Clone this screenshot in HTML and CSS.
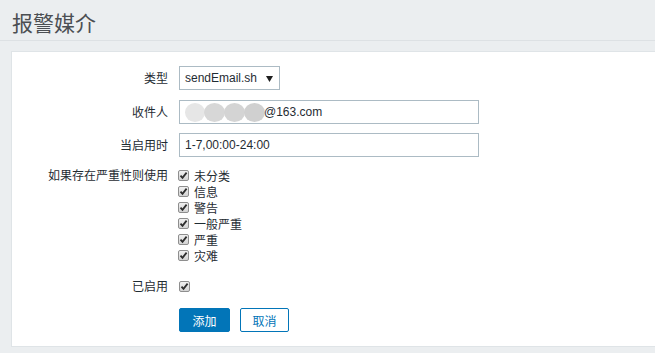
FILE: index.html
```html
<!DOCTYPE html>
<html lang="zh">
<head>
<meta charset="utf-8">
<title>报警媒介</title>
<link rel="stylesheet" href="styles.css">
</head>
<body>
<header class="page-header">
  <h1 class="page-title">报警媒介</h1>
</header>
<main class="panel">
  <form class="form">
    <div class="row row-type">
      <label class="label">类型</label>
      <div class="control">
        <div class="select">
          <span>sendEmail.sh</span>
          <svg class="arrow" width="7" height="6" viewBox="0 0 7 6"><path d="M0 0H7L3.5 6Z" fill="#1f1f1f"/></svg>
        </div>
      </div>
    </div>
    <div class="row row-to">
      <label class="label">收件人</label>
      <div class="control">
        <div class="input">
          <span class="blur">
            <i class="blob b1"></i><i class="blob b2"></i><i class="blob b3"></i><i class="blob b4"></i>
          </span><span>@163.com</span>
        </div>
      </div>
    </div>
    <div class="row row-period">
      <label class="label">当启用时</label>
      <div class="control">
        <div class="input"><span>1-7,00:00-24:00</span></div>
      </div>
    </div>
    <div class="row row-sev">
      <label class="label lh16">如果存在严重性则使用</label>
      <ul class="checks">
        <li><span class="cb"><svg width="9" height="9" viewBox="0 0 9 9"><path d="M1.5 4.6L3.5 6.8L7.6 1.6" fill="none" stroke="#2e2e2e" stroke-width="1.8"/></svg></span>未分类</li>
        <li><span class="cb"><svg width="9" height="9" viewBox="0 0 9 9"><path d="M1.5 4.6L3.5 6.8L7.6 1.6" fill="none" stroke="#2e2e2e" stroke-width="1.8"/></svg></span>信息</li>
        <li><span class="cb"><svg width="9" height="9" viewBox="0 0 9 9"><path d="M1.5 4.6L3.5 6.8L7.6 1.6" fill="none" stroke="#2e2e2e" stroke-width="1.8"/></svg></span>警告</li>
        <li><span class="cb"><svg width="9" height="9" viewBox="0 0 9 9"><path d="M1.5 4.6L3.5 6.8L7.6 1.6" fill="none" stroke="#2e2e2e" stroke-width="1.8"/></svg></span>一般严重</li>
        <li><span class="cb"><svg width="9" height="9" viewBox="0 0 9 9"><path d="M1.5 4.6L3.5 6.8L7.6 1.6" fill="none" stroke="#2e2e2e" stroke-width="1.8"/></svg></span>严重</li>
        <li><span class="cb"><svg width="9" height="9" viewBox="0 0 9 9"><path d="M1.5 4.6L3.5 6.8L7.6 1.6" fill="none" stroke="#2e2e2e" stroke-width="1.8"/></svg></span>灾难</li>
      </ul>
    </div>
    <div class="row row-active">
      <label class="label lh16">已启用</label>
      <div class="checks">
        <div class="check-line"><span class="cb"><svg width="9" height="9" viewBox="0 0 9 9"><path d="M1.5 4.6L3.5 6.8L7.6 1.6" fill="none" stroke="#2e2e2e" stroke-width="1.8"/></svg></span></div>
      </div>
    </div>
    <div class="row row-buttons">
      <span></span>
      <div class="buttons">
        <button type="button" class="btn btn-primary">添加</button>
        <button type="button" class="btn btn-secondary">取消</button>
      </div>
    </div>
  </form>
</main>
</body>
</html>
```
FILE: styles.css
```css
* { box-sizing: border-box; }
html, body { margin: 0; padding: 0; }
body {
  background: #ebeef0;
  font-family: Arial, "Liberation Sans", "Noto Sans CJK SC", sans-serif;
  font-size: 12px;
  color: #1f2c33;
  width: 655px;
  height: 353px;
  overflow: hidden;
}
.page-header {
  height: 41px;
  border-bottom: 1px solid #dde1e4;
  padding: 0 12px;
  display: flex;
  align-items: center;
}
.page-title {
  margin: 0;
  font-family: "Noto Sans CJK SC", sans-serif;
  font-weight: 400;
  font-size: 21px;
  line-height: 24px;
  color: #4b4f53;
  position: relative;
  top: 2px;
}
.panel {
  margin: 10px 0 0 11px;
  width: 660px;
  background: #fff;
  border: 1px solid #dfe4e7;
  padding: 14px 0 14px 0;
}
.form { display: flex; flex-direction: column; }
.row {
  display: grid;
  grid-template-columns: 156px 1fr;
  column-gap: 11px;
  align-items: start;
}
.row-to { margin-top: 10px; }
.row-period { margin-top: 9px; }
.row-sev { margin-top: 10px; }
.row-active { margin-top: 15px; }
.row-buttons { margin-top: 14px; }
.label {
  text-align: right;
  line-height: 24px;
  font-family: "Noto Sans CJK SC", sans-serif;
  color: #1f2c33;
  white-space: nowrap;
}
.label.lh16 { line-height: 16px; }
.select {
  width: 101px;
  height: 24px;
  border: 1px solid #acbbc4;
  display: flex;
  align-items: center;
  justify-content: space-between;
  padding: 0 6px 0 5px;
  font-size: 12px;
  color: #1f2c33;
}
.arrow { margin-top: 1px; }
.input {
  width: 300px;
  height: 24px;
  border: 1px solid #acbbc4;
  display: flex;
  align-items: center;
  padding: 0 5px;
  color: #1f2c33;
}
.blur { display: inline-flex; align-items: center; margin-right: 0; }
.blob {
  display: inline-block;
  width: 21px;
  height: 19px;
  border-radius: 50%;
  background: #d6d6d6;
  margin-right: -1px;
}
.b1 { background: #e6e6e6; width: 20px; }
.b2 { background: #d7d7d7; }
.b3 { background: #d4d4d4; }
.b4 { background: #d0d0d0; }
.checks {
  list-style: none;
  margin: 0;
  padding: 0;
}
.checks li, .check-line {
  display: flex;
  align-items: center;
  height: 16px;
  font-family: "Noto Sans CJK SC", sans-serif;
  color: #1f2c33;
}
.cb {
  width: 11px;
  height: 11px;
  border: 1px solid #8e8e8e;
  border-radius: 2px;
  background: linear-gradient(#f0f0f0, #d4d4d4);
  display: inline-flex;
  align-items: center;
  justify-content: center;
  margin: 0 5px 0 -1px;
}
.check-line .cb { margin-left: 0; }
.cb svg { display: block; }
.buttons { display: flex; gap: 10px; }
.btn {
  height: 24px;
  padding: 0;
  font-family: "Noto Sans CJK SC", sans-serif;
  font-size: 12px;
  border-radius: 2px;
  cursor: pointer;
}
.btn-primary {
  width: 51px;
  background: #0275b8;
  border: 1px solid #0275b8;
  color: #fff;
}
.btn-secondary {
  width: 49px;
  background: #fff;
  border: 1px solid #0275b8;
  color: #0275b8;
}
```
